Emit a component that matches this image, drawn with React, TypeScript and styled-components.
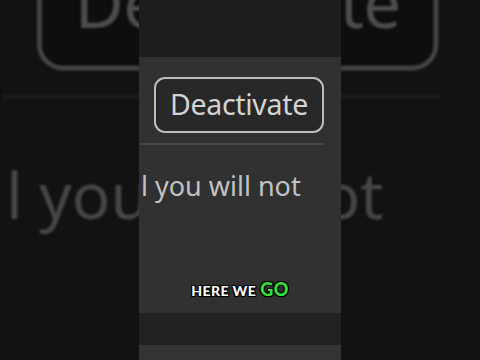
import React from 'react';
import styled, { createGlobalStyle } from 'styled-components';

const GlobalStyle = createGlobalStyle`
  html, body {
    margin: 0;
    padding: 0;
    background: #101010;
  }
`;

const Page = styled.div`
  position: relative;
  width: 480px;
  height: 360px;
  overflow: hidden;
  background: #101010;
  display: flex;
  justify-content: center;
  font-family: 'Noto Sans', 'Open Sans', sans-serif;
`;

// blown-up, dimmed copy of the clip that fills the sides
const Backdrop = styled.div`
  position: absolute;
  inset: 0;
  display: flex;
  justify-content: center;
  filter: brightness(0.36) blur(1.2px);
`;

const Front = styled.div`
  position: relative;
  z-index: 1;
  display: flex;
`;

interface ColumnProps {
  scale?: number;
}

const Column = styled.div<ColumnProps>`
  width: 202px;
  height: 360px;
  flex: none;
  display: flex;
  flex-direction: column;
  overflow: hidden;
  transform: ${props => (props.scale ? `scale(${props.scale})` : 'none')};
  transform-origin: 101px 179px;
`;

const TopBar = styled.div`
  height: 57px;
  background: #1e1e1e;
  flex: none;
`;

const Panel = styled.div`
  height: 256px;
  flex: none;
  background: #313131;
  display: flex;
  flex-direction: column;
  padding-top: 20px;
  box-sizing: border-box;
`;

const Button = styled.div`
  margin-left: 15px;
  width: 170px;
  height: 56px;
  box-sizing: border-box;
  border: 2px solid #bdbdbd;
  border-radius: 11px;
  background: #282828;
  display: flex;
  align-items: center;
  justify-content: center;
  color: #d4d4d4;
  font-size: 28.5px;
  letter-spacing: -0.3px;
  padding-bottom: 3px;
`;

const Divider = styled.div`
  margin-top: 10px;
  width: 186px;
  height: 2px;
  background: #474747;
`;

const Body = styled.div`
  margin-top: 23px;
  padding-left: 2px;
  color: #c2c2c2;
  font-size: 27px;
  line-height: 36px;
  white-space: nowrap;
`;

const Band = styled.div`
  height: 32px;
  background: #222222;
  flex: none;
`;

const Rest = styled.div`
  flex: 1;
  background: #343434;
`;

const Caption = styled.div`
  position: absolute;
  z-index: 2;
  left: 0;
  right: 0;
  top: 278px;
  display: flex;
  justify-content: center;
  align-items: baseline;
  gap: 4px;
  font-family: Lato, 'Open Sans', sans-serif;
  font-weight: 900;
  letter-spacing: 0.4px;
  -webkit-text-stroke: 1.5px #000;
  paint-order: stroke fill;
  text-shadow: 1px 1px 0 #000, -1px 1px 0 #000, 1px -1px 0 #000, -1px -1px 0 #000;
`;

interface WordProps {
  accent?: boolean;
}

const Word = styled.span<WordProps>`
  color: ${props => (props.accent ? '#35e03a' : '#ffffff')};
  font-size: ${props => (props.accent ? '18px' : '14px')};
`;

function Clip({ scale }: ColumnProps) {
  return (
    <Column scale={scale}>
      <TopBar />
      <Panel>
        <Button>Deactivate</Button>
        <Divider />
        <Body>l you will not</Body>
      </Panel>
      <Band />
      <Rest />
    </Column>
  );
}

export default function App() {
  return (
    <Page>
      <GlobalStyle />
      <Backdrop>
        <Clip scale={2.36} />
      </Backdrop>
      <Front>
        <Clip />
      </Front>
      <Caption>
        <Word>HERE WE</Word>
        <Word accent>GO</Word>
      </Caption>
    </Page>
  );
}
